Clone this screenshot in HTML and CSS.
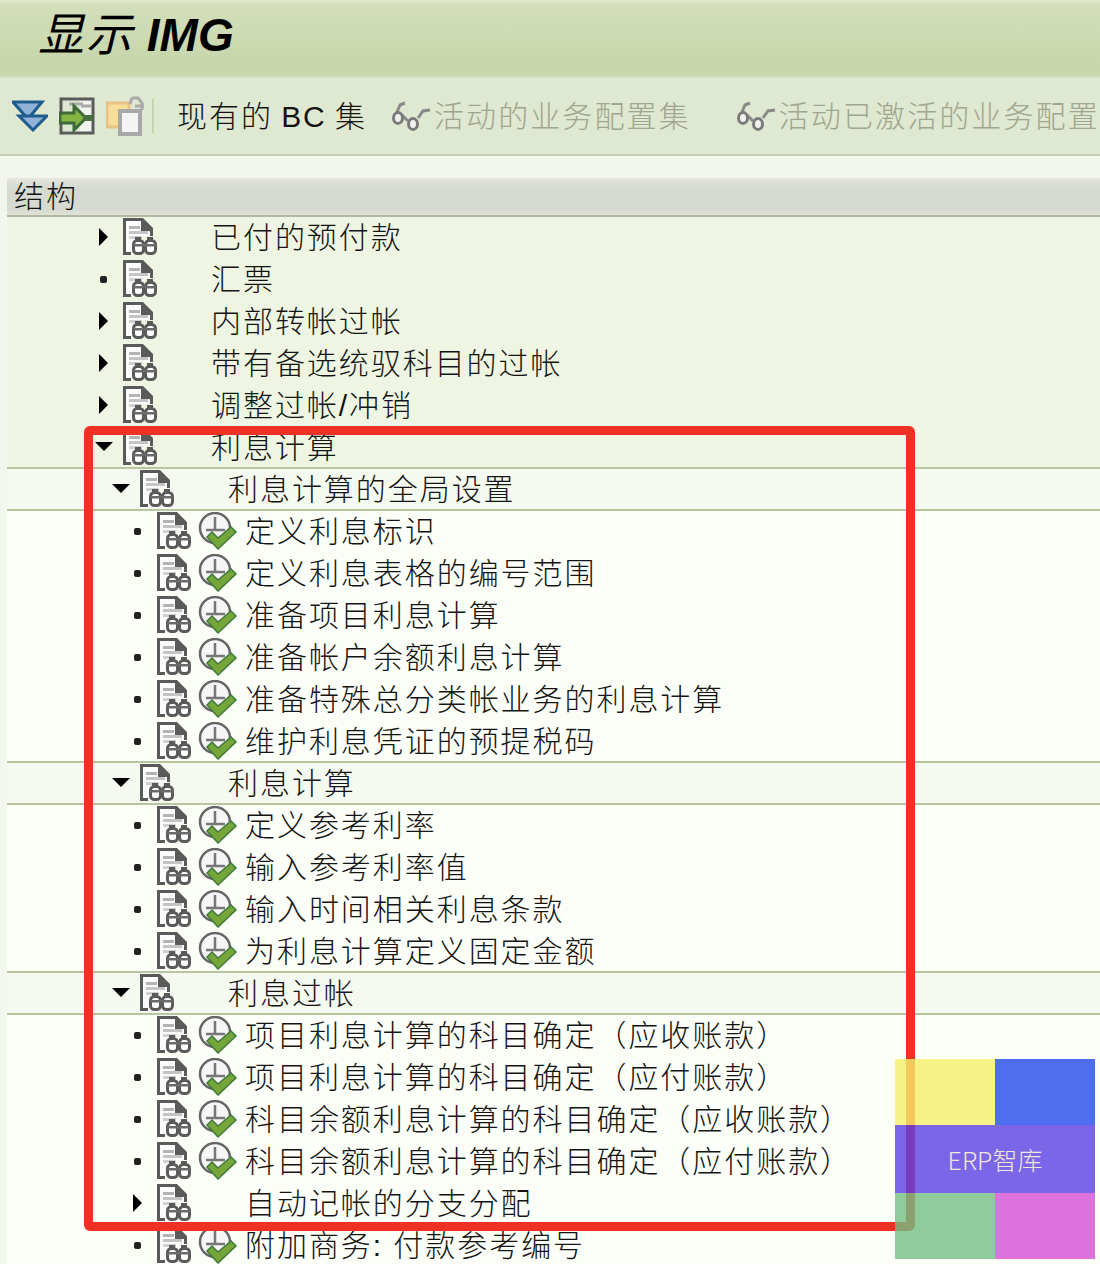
FILE: index.html
```html
<!DOCTYPE html>
<html lang="zh">
<head>
<meta charset="utf-8">
<title>显示 IMG</title>
<link rel="stylesheet" href="styles.css">
</head>
<body>
<svg class="defs" width="0" height="0" aria-hidden="true">
  <symbol id="doc" viewBox="0 0 34 37">
    <path d="M0 0H20L30 10V18H27V13H18V3H3V34H8V37H0Z" fill="#5a5a5a"/>
    <path d="M3 3H18V13H27V18H3Z" fill="#fbfbfb"/>
    <path d="M3 18H9V34H3Z" fill="#fbfbfb"/>
    <path d="M20 1L29 11H20Z" fill="#5a5a5a"/>
    <rect x="6" y="8" width="11" height="3" fill="#b4b4b4"/>
    <rect x="6" y="13" width="19" height="3" fill="#c4c4c4"/>
    <rect x="6" y="18" width="13" height="3" fill="#d0d0d0"/>
    <rect x="12" y="19" width="6" height="3" fill="#5a5a5a"/>
    <rect x="24" y="19" width="6" height="3" fill="#5a5a5a"/>
    <rect x="10.5" y="22.5" width="10" height="13" rx="4" fill="#fff" stroke="#5a5a5a" stroke-width="3"/>
    <rect x="22.5" y="22.5" width="10" height="13" rx="4" fill="#fff" stroke="#5a5a5a" stroke-width="3"/>
    <rect x="10" y="26" width="23" height="2.5" fill="#6a6a6a"/>
  </symbol>
  <symbol id="clock" viewBox="0 0 40 38">
    <circle cx="17" cy="16" r="15" fill="#f6f6f6" stroke="#666" stroke-width="2.5"/>
    <path d="M17 5V18M8 18H27" stroke="#777" stroke-width="2.5" fill="none"/>
    <path d="M9 25L14 20L20 26L33 15L38 20L20 37Z" fill="#76a53a" stroke="#3f7a3a" stroke-width="1.5"/>
  </symbol>
  <symbol id="glasses" viewBox="0 0 40 32">
    <path d="M13 3L8 5L5 12" fill="none" stroke="#8a8a8a" stroke-width="3"/>
    <path d="M10 15L16 21" fill="none" stroke="#8a8a8a" stroke-width="3"/>
    <path d="M26 18L31 11L38 10" fill="none" stroke="#8a8a8a" stroke-width="3"/>
    <ellipse cx="6" cy="18" rx="4.5" ry="5.5" fill="#f0f0ec" stroke="#7a7a7a" stroke-width="3"/>
    <ellipse cx="21" cy="24" rx="4.5" ry="5.5" fill="#f0f0ec" stroke="#7a7a7a" stroke-width="3"/>
  </symbol>
</svg>

<main class="page">
  <header class="titlebar">
    <h1 class="title"><span class="title-cjk">显示</span> <span class="title-lat">IMG</span></h1>
  </header>

  <nav class="toolbar">
    <svg class="tool tool-tri" viewBox="0 0 36 32">
      <path d="M1 2H30L16 19Z" fill="#90b1d8" stroke="#1f5c8e" stroke-width="3"/>
      <path d="M7 16H35L21 30Z" fill="#90b1d8" stroke="#1f5c8e" stroke-width="3"/>
    </svg>
    <svg class="tool tool-tree" viewBox="0 0 36 38">
      <rect x="2" y="2" width="32" height="34" fill="#f2f4ee" stroke="#5a5a5a" stroke-width="3"/>
      <rect x="4" y="4" width="17" height="30" fill="#dfe6d2"/>
      <path d="M10 7H24M22 9H33" stroke="#aaa" stroke-width="3"/>
      <path d="M1 16H15V9L27 21L15 33V26H1Z" fill="#86b440" stroke="#3d6a39" stroke-width="3"/>
      <rect x="24" y="18" width="10" height="6" fill="#4a7040"/>
    </svg>
    <svg class="tool tool-copy" viewBox="0 0 38 40">
      <rect x="1" y="7" width="22" height="24" fill="#f6de96" stroke="#e9c286" stroke-width="3"/>
      <rect x="14" y="15" width="20" height="23" fill="#f4f4f4" stroke="#a8a8a8" stroke-width="4"/>
      <path d="M26 2H32L36 7V14M26 2L24 8M29 10H38" fill="none" stroke="#aaa" stroke-width="3"/>
    </svg>
    <span class="tool-sep"></span>
    <span class="tool-label">现有的 BC 集</span>
    <svg class="glasses glasses-first"><use href="#glasses"/></svg>
    <span class="tool-label tool-label-off">活动的业务配置集</span>
    <svg class="glasses glasses-second"><use href="#glasses"/></svg>
    <span class="tool-label tool-label-off">活动已激活的业务配置集</span>
  </nav>

  <section class="tree">
    <div class="tree-head">结构</div>

    <div class="row l1"><span class="arrow right"></span><svg class="doc"><use href="#doc"/></svg><span class="slot"></span><span class="label">已付的预付款</span></div>
    <div class="row l1"><span class="arrow dot"></span><svg class="doc"><use href="#doc"/></svg><span class="slot"></span><span class="label">汇票</span></div>
    <div class="row l1"><span class="arrow right"></span><svg class="doc"><use href="#doc"/></svg><span class="slot"></span><span class="label">内部转帐过帐</span></div>
    <div class="row l1"><span class="arrow right"></span><svg class="doc"><use href="#doc"/></svg><span class="slot"></span><span class="label">带有备选统驭科目的过帐</span></div>
    <div class="row l1"><span class="arrow right"></span><svg class="doc"><use href="#doc"/></svg><span class="slot"></span><span class="label">调整过帐/冲销</span></div>
    <div class="row l1 ruled"><span class="arrow down"></span><svg class="doc"><use href="#doc"/></svg><span class="slot"></span><span class="label">利息计算</span></div>

    <div class="row l2 ruled"><span class="arrow down"></span><svg class="doc"><use href="#doc"/></svg><span class="slot"></span><span class="label">利息计算的全局设置</span></div>
    <div class="row l3"><span class="arrow dot"></span><svg class="doc"><use href="#doc"/></svg><span class="slot"><svg class="clock"><use href="#clock"/></svg></span><span class="label">定义利息标识</span></div>
    <div class="row l3"><span class="arrow dot"></span><svg class="doc"><use href="#doc"/></svg><span class="slot"><svg class="clock"><use href="#clock"/></svg></span><span class="label">定义利息表格的编号范围</span></div>
    <div class="row l3"><span class="arrow dot"></span><svg class="doc"><use href="#doc"/></svg><span class="slot"><svg class="clock"><use href="#clock"/></svg></span><span class="label">准备项目利息计算</span></div>
    <div class="row l3"><span class="arrow dot"></span><svg class="doc"><use href="#doc"/></svg><span class="slot"><svg class="clock"><use href="#clock"/></svg></span><span class="label">准备帐户余额利息计算</span></div>
    <div class="row l3"><span class="arrow dot"></span><svg class="doc"><use href="#doc"/></svg><span class="slot"><svg class="clock"><use href="#clock"/></svg></span><span class="label">准备特殊总分类帐业务的利息计算</span></div>
    <div class="row l3 ruled"><span class="arrow dot"></span><svg class="doc"><use href="#doc"/></svg><span class="slot"><svg class="clock"><use href="#clock"/></svg></span><span class="label">维护利息凭证的预提税码</span></div>

    <div class="row l2 ruled"><span class="arrow down"></span><svg class="doc"><use href="#doc"/></svg><span class="slot"></span><span class="label">利息计算</span></div>
    <div class="row l3"><span class="arrow dot"></span><svg class="doc"><use href="#doc"/></svg><span class="slot"><svg class="clock"><use href="#clock"/></svg></span><span class="label">定义参考利率</span></div>
    <div class="row l3"><span class="arrow dot"></span><svg class="doc"><use href="#doc"/></svg><span class="slot"><svg class="clock"><use href="#clock"/></svg></span><span class="label">输入参考利率值</span></div>
    <div class="row l3"><span class="arrow dot"></span><svg class="doc"><use href="#doc"/></svg><span class="slot"><svg class="clock"><use href="#clock"/></svg></span><span class="label">输入时间相关利息条款</span></div>
    <div class="row l3 ruled"><span class="arrow dot"></span><svg class="doc"><use href="#doc"/></svg><span class="slot"><svg class="clock"><use href="#clock"/></svg></span><span class="label">为利息计算定义固定金额</span></div>

    <div class="row l2 ruled"><span class="arrow down"></span><svg class="doc"><use href="#doc"/></svg><span class="slot"></span><span class="label">利息过帐</span></div>
    <div class="row l3"><span class="arrow dot"></span><svg class="doc"><use href="#doc"/></svg><span class="slot"><svg class="clock"><use href="#clock"/></svg></span><span class="label">项目利息计算的科目确定（应收账款）</span></div>
    <div class="row l3"><span class="arrow dot"></span><svg class="doc"><use href="#doc"/></svg><span class="slot"><svg class="clock"><use href="#clock"/></svg></span><span class="label">项目利息计算的科目确定（应付账款）</span></div>
    <div class="row l3"><span class="arrow dot"></span><svg class="doc"><use href="#doc"/></svg><span class="slot"><svg class="clock"><use href="#clock"/></svg></span><span class="label">科目余额利息计算的科目确定（应收账款）</span></div>
    <div class="row l3"><span class="arrow dot"></span><svg class="doc"><use href="#doc"/></svg><span class="slot"><svg class="clock"><use href="#clock"/></svg></span><span class="label">科目余额利息计算的科目确定（应付账款）</span></div>
    <div class="row l3"><span class="arrow right"></span><svg class="doc"><use href="#doc"/></svg><span class="slot"></span><span class="label">自动记帐的分支分配</span></div>
    <div class="row l3"><span class="arrow dot"></span><svg class="doc"><use href="#doc"/></svg><span class="slot"><svg class="clock"><use href="#clock"/></svg></span><span class="label">附加商务: 付款参考编号</span></div>
  </section>

  <div class="highlight"></div>

  <aside class="watermark">
    <span class="wm wm-yellow"></span>
    <span class="wm wm-blue"></span>
    <span class="wm wm-purple">ERP智库</span>
    <span class="wm wm-green"></span>
    <span class="wm wm-pink"></span>
  </aside>
</main>
</body>
</html>
```

FILE: styles.css
```css
* { box-sizing: border-box; }

html, body {
  margin: 0;
  padding: 0;
  height: 1264px;
  overflow: hidden;
  background: #f3f6ec;
}

body {
  font-family: "Liberation Sans", "Noto Sans CJK SC", sans-serif;
  font-weight: 300;
  color: #141414;
}

.defs { position: absolute; }

.page {
  position: relative;
  width: 1100px;
  height: 1264px;
  overflow: hidden;
}

/* Title bar */
.titlebar {
  height: 78px;
  padding: 0 0 6px 38px;
  display: flex;
  align-items: center;
  background: linear-gradient(#dfe6d0 0, #dfe6d0 2px, #d4dfbb 3px, #c9d7ae 70%, #c8d6ad 100%);
  border-bottom: 2px solid #d3dcc3;
}

.title {
  margin: 0;
  font-size: 46px;
  line-height: 70px;
  font-style: italic;
  font-weight: 400;
  color: #000;
  white-space: pre;
}

.title-cjk { font-size: 46px; letter-spacing: 2px; }

.title-lat {
  font-weight: 700;
  font-size: 46px;
}

/* Toolbar */
.toolbar {
  height: 78px;
  display: flex;
  align-items: center;
  padding-left: 12px;
  background: #dfe8d0;
  border-bottom: 2px solid #c4cdb2;
  white-space: nowrap;
  overflow: hidden;
}

.tool { flex: none; display: block; }
.tool-tri { width: 36px; height: 32px; }
.tool-tree { width: 36px; height: 38px; margin-left: 11px; }
.tool-copy { width: 38px; height: 40px; margin-left: 11px; }

.tool-sep {
  flex: none;
  width: 2px;
  height: 34px;
  margin-left: 8px;
  background: #c5d5ab;
}

.tool-label {
  flex: none;
  margin: 1px 0 0 23px;
  font-size: 30px;
  letter-spacing: 1.95px;
  word-spacing: -2px;
  line-height: 40px;
  color: #141414;
}

.tool-label-off {
  margin-left: 2px;
  letter-spacing: 2.1px;
  color: #9fa58f;
}

.glasses { flex: none; width: 40px; height: 32px; }
.glasses-first { margin-left: 25px; }
.glasses-second { margin-left: 46px; }

/* Tree */
.tree {
  margin: 22px 0 0 7px;
  background: #fcfff8;
}

.tree-head {
  height: 39px;
  padding: 0 0 5px 7px;
  display: flex;
  align-items: center;
  font-size: 30px;
  letter-spacing: 1.95px;
  background: linear-gradient(#e6e7e0 0, #d6dad0 25%, #d6dad0 85%, #e0e2da 100%);
  border-bottom: 2px solid #b3b9a1;
}

.row {
  height: 42px;
  display: flex;
  align-items: flex-start;
  white-space: nowrap;
}

.row.ruled { border-bottom: 2px solid #b6c69f; }

.l1 { padding-left: 88px; background: #eef6e3; }
.l2 { padding-left: 105px; background: #f5faf0; }
.l3 { padding-left: 122px; background: #fcfff8; }

.arrow {
  flex: none;
  position: relative;
  width: 16px;
  height: 16px;
  margin: 12px 12px 0 0;
}

.arrow::before {
  content: "";
  position: absolute;
  left: 50%;
  top: 50%;
}

.arrow.right::before {
  margin: -9px 0 0 -4px;
  border-left: 9px solid #000;
  border-top: 9px solid transparent;
  border-bottom: 9px solid transparent;
}

.arrow.down::before {
  margin: -5px 0 0 -8px;
  border-top: 9px solid #000;
  border-left: 9px solid transparent;
  border-right: 9px solid transparent;
}

.arrow.dot::before {
  width: 7px;
  height: 7px;
  margin: -3px 0 0 -3px;
  background: #222;
  border-radius: 2px;
}

.doc { flex: none; width: 34px; height: 37px; margin: 1px 0 0 0; }

.slot {
  flex: none;
  width: 54px;
  height: 38px;
  padding-left: 7px;
}

.clock { display: block; width: 40px; height: 38px; margin-top: 1px; }

.label {
  margin-top: 1px;
  font-size: 30px;
  letter-spacing: 1.95px;
  line-height: 40px;
}

/* Red highlight frame, drawn over the tree */
.highlight {
  position: absolute;
  left: 84px;
  top: 426px;
  width: 831px;
  height: 805px;
  border: 9px solid #ee3124;
  border-radius: 6px;
}

/* Watermark, drawn over everything */
.watermark {
  position: absolute;
  left: 895px;
  top: 1059px;
  width: 200px;
  height: 200px;
  display: grid;
  grid-template-columns: 100px 100px;
  grid-template-rows: 66px 68px 66px;
}

.wm-yellow { background: rgba(244, 239, 105, 0.8); }
.wm-blue { background: rgba(33, 75, 236, 0.8); }
.wm-green { background: rgba(115, 190, 131, 0.8); }
.wm-pink { background: rgba(213, 79, 214, 0.8); }

.wm-purple {
  grid-column: 1 / 3;
  display: flex;
  align-items: center;
  justify-content: center;
  background: rgba(90, 64, 228, 0.8);
  color: #f0e9d8;
  font-family: "Noto Sans CJK SC", sans-serif;
  font-size: 25px;
  font-weight: 300;
}
```
